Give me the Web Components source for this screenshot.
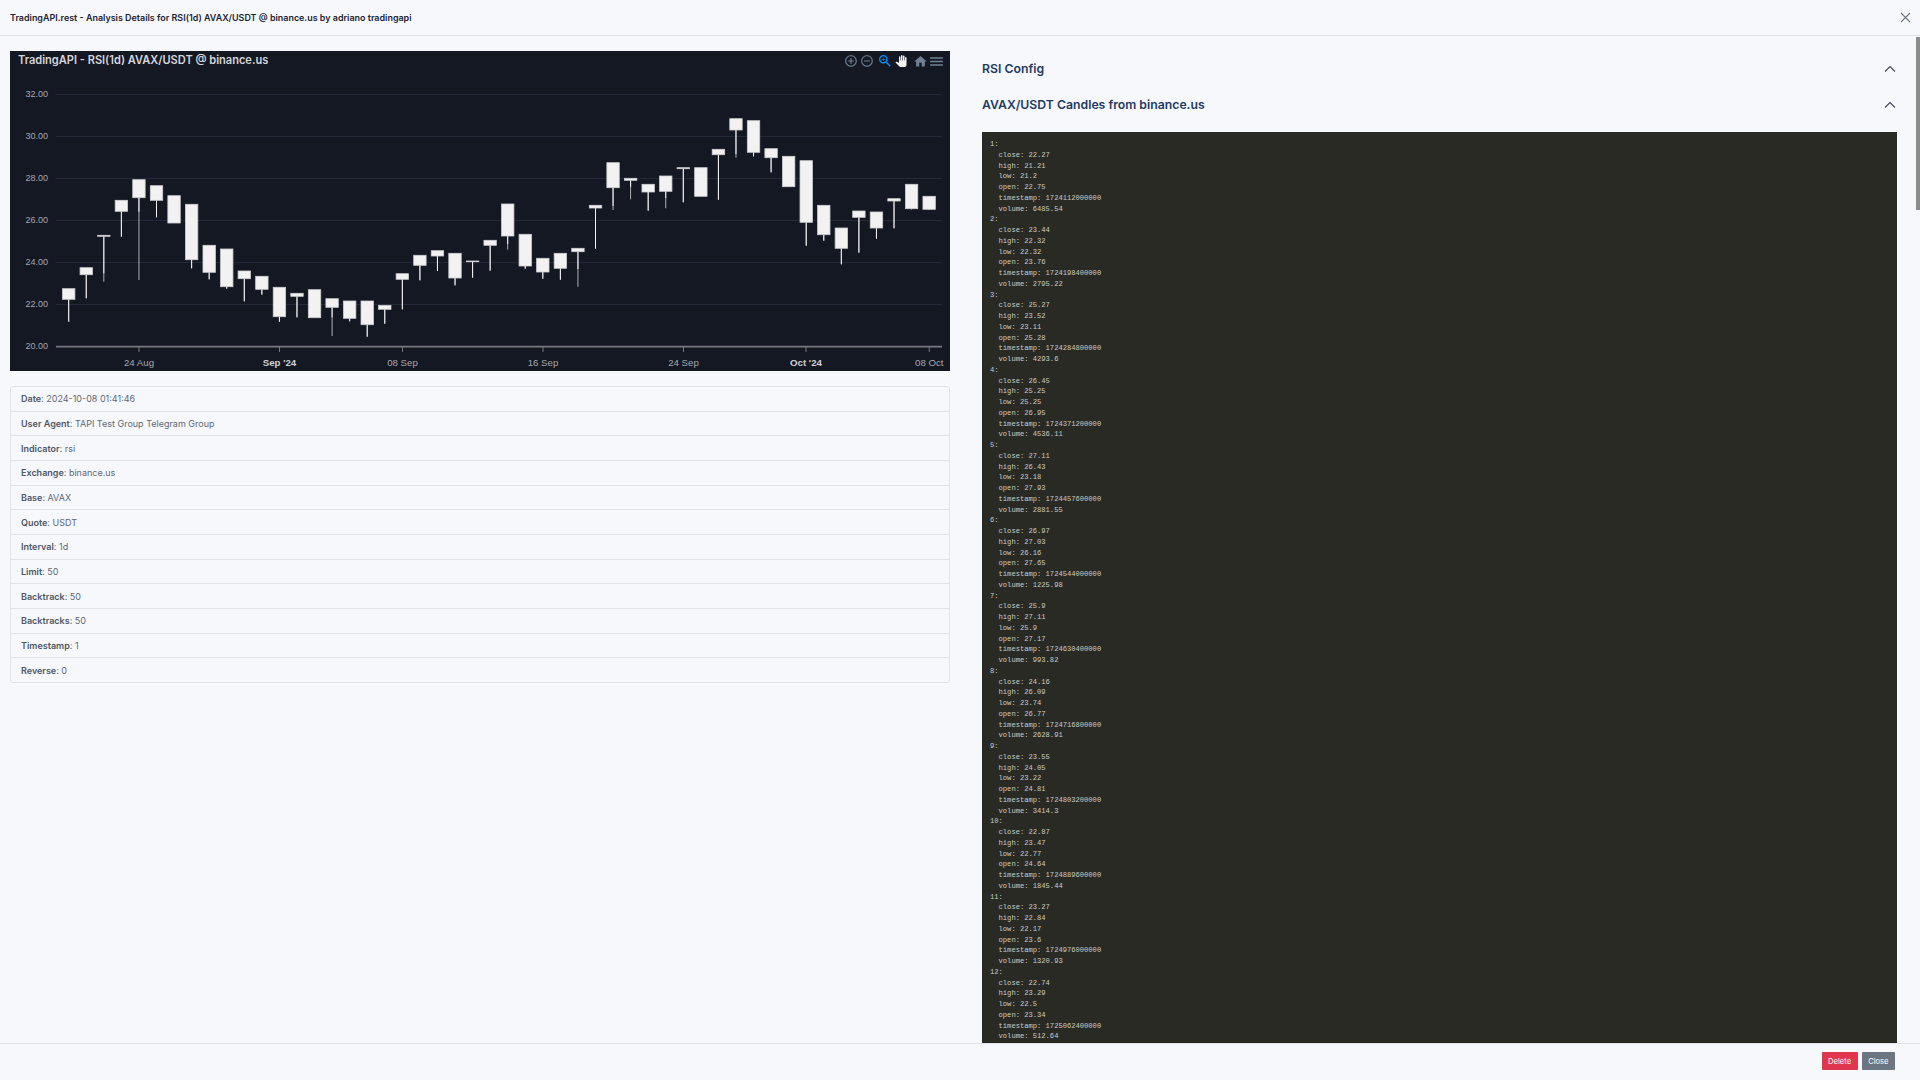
<!DOCTYPE html>
<html>
<head>
<meta charset="utf-8">
<title>TradingAPI.rest</title>
<style>
  html, body { margin: 0; height: 100%; overflow: hidden; }
  body {
    background: #f6f8fc;
    font-family: Inter, "Liberation Sans", sans-serif;
  }
  tapi-modal { height: 100vh; }
</style>
</head>
<body>
<tapi-modal>
  <span slot="title">TradingAPI.rest - Analysis Details for RSI(1d) AVAX/USDT @ binance.us by adriano tradingapi</span>

  <tapi-chart slot="left" title="TradingAPI - RSI(1d) AVAX/USDT @ binance.us"></tapi-chart>
  <tapi-info-list slot="left">
    <tapi-info-row label="Date">2024-10-08 01:41:46</tapi-info-row>
    <tapi-info-row label="User Agent">TAPI Test Group Telegram Group</tapi-info-row>
    <tapi-info-row label="Indicator">rsi</tapi-info-row>
    <tapi-info-row label="Exchange">binance.us</tapi-info-row>
    <tapi-info-row label="Base">AVAX</tapi-info-row>
    <tapi-info-row label="Quote">USDT</tapi-info-row>
    <tapi-info-row label="Interval">1d</tapi-info-row>
    <tapi-info-row label="Limit">50</tapi-info-row>
    <tapi-info-row label="Backtrack">50</tapi-info-row>
    <tapi-info-row label="Backtracks">50</tapi-info-row>
    <tapi-info-row label="Timestamp">1</tapi-info-row>
    <tapi-info-row label="Reverse">0</tapi-info-row>
  </tapi-info-list>

  <tapi-accordion slot="right">RSI Config</tapi-accordion>
  <tapi-accordion slot="right">AVAX/USDT Candles from binance.us</tapi-accordion>
  <tapi-candle-dump slot="right"></tapi-candle-dump>

  <tapi-button slot="footer" kind="danger">Delete</tapi-button>
  <tapi-button slot="footer" kind="muted">Close</tapi-button>
</tapi-modal>

<script>
class tapiModal extends HTMLElement {
    constructor() {
        super();
        this.attachShadow({mode: 'open'});
        this.shadowRoot.innerHTML = `
      <style>
      :host {
        display: flex;
        flex-direction: column;
        position: relative;
      }
      header {
        flex: none;
        height: 35px;
        border-bottom: 1px solid #dfe2e7;
        display: flex;
        align-items: center;
        justify-content: space-between;
        padding: 0 10px;
        font-size: 8.95px;
        font-weight: 600;
        color: #1c2430;
      }
      header svg {
        display: block;
        margin-right: -1px;
      }
      .body {
        flex: 1;
        min-height: 0;
        overflow: hidden;
        display: grid;
        grid-template-columns: 940px 915px;
        column-gap: 32px;
        align-items: start;
        padding: 15px 0 0 10px;
      }
      /* the photograph hides native scrollbars, so the thumb is drawn over the body */
      .thumb {
        position: absolute;
        top: 37px;
        right: 0;
        width: 4px;
        height: 173px;
        background: #8b8b8b;
      }
      .col {
        display: flex;
        flex-direction: column;
        min-width: 0;
      }
      footer {
        flex: none;
        height: 37px;
        box-sizing: border-box;
        border-top: 1px solid #dfe2e7;
        background: #f6f8fc;
        display: flex;
        align-items: center;
        justify-content: flex-end;
        gap: 4px;
        padding: 0 25px 2px 0;
      }
      </style>
      <header>
        <slot name="title"></slot>
        <svg width="11" height="11" viewBox="0 0 11 11" fill="none" stroke="#6f7682" stroke-width="1.1"><path d="M1 1l9 9M10 1l-9 9"/></svg>
      </header>
      <div class="body">
        <div class="col"><slot name="left"></slot></div>
        <div class="col"><slot name="right"></slot></div>
      </div>
      <div class="thumb"></div>
      <footer><slot name="footer"></slot></footer>
    `;
    }
}

// top, bottom, wick end, and where the brighter part of the wick stops (all read off the picture)
const CANDLES = [
    [188.7,199.3,221.7],[167.7,174.7,198.3],[135.3,136.3,181.7,173.3],[100.3,111.3,136.7],[79.7,97.7,180,111.7],
    [85.7,100.3,117.3],[95.7,123,123],[104.3,159.7,168.3],[145.3,172.3,179.3],[149,186.7,188.7],
    [171,178.7,201.3],[176.3,189.3,194.7],[187.3,216.7,221.7],[193.3,196.3,217.3],[189.7,217.7,217.7],
    [198.7,207.3,236,217.3],[201,218.3,221.3],[201,224.7,236.7],[205.3,209.3,223.7],[173.7,179.3,209.3],
    [155.3,165.3,180.3],[150.7,156,171],[153.3,178,185.3],[161,161.7,177.7],[140.3,145.3,170.7],
    [104,136,149.7,144],[134.3,166,168.7],[158.3,172,178.7],[153.3,168.3,179.7],[148.3,151.7,186.7,169],
    [105.3,108,148.7],[62.7,87.7,110,106],[78.3,80.3,99.3,87],[84.3,92,110.7],[76,91.3,108.3,98],
    [67.7,68.7,102.3],[67.7,96.3,96.3],[49.3,54.7,99.7],[18.7,30,57.7,54],[20.7,52.3,56.3],
    [48.7,57.7,72.3],[56.3,86.7,86.7],[60.7,122.3,145.7],[105.3,134.7,140.7],[128,148.3,164.3],
    [111,117.3,152.7],[112,128,138.7],[98.7,101,128.3],[84.3,108.7,109.3],[96.3,109.3,109.7]
];

class tapiChart extends HTMLElement {
    constructor() {
        super();
        this.attachShadow({mode: 'open'});
    }

    connectedCallback() {
        const grid = [['32.00', 94.5], ['30.00', 136.5], ['28.00', 178.5], ['26.00', 220.5], ['24.00', 262.5], ['22.00', 304.5], ['20.00', 346.5]];
        const ticks = [['24 Aug', 139], ["Sep '24", 279.5, true], ['08 Sep', 402.5], ['16 Sep', 543], ['24 Sep', 683.5], ["Oct '24", 806, true], ['08 Oct', 929.3]];

        // everything is in page coordinates, the svg viewBox takes care of the 10,51 origin
        const gridLines = grid.map(([label, y], i) => `
          <text class="y" x="48" y="${y + 2.9}">${label}</text>
          ${i < 6 ? `<line x1="56" x2="942" y1="${y}" y2="${y}" stroke="#242839"/>` : ''}
        `).join('');

        const tickLines = ticks.map(([label, x, bold]) => `
          <line x1="${x}" x2="${x}" y1="347" y2="352" stroke="#78787f"/>
          <text class="x${bold ? ' bold' : ''}" x="${x}" y="366">${label}</text>
        `).join('');

        const candles = CANDLES.map(([top, bottom, end, mid], i) => {
            const x = (68.7 + 17.56 * i).toFixed(2);
            const y1 = 100 + top;
            const y2 = 100 + bottom;
            const y3 = 100 + end;
            const y4 = 100 + (mid || end);
            return `
          <line x1="${x}" x2="${x}" y1="${y2}" y2="${y3}" stroke="#f2f2f2" opacity=".7"/>
          <line x1="${x}" x2="${x}" y1="${y2}" y2="${y4}" stroke="#f2f2f2"/>
          <rect x="${x - 6.2}" y="${y1}" width="12.4" height="${(bottom - top).toFixed(1)}" fill="#f2f2f2" stroke="#cfcfd2" stroke-width=".8"/>`;
        }).join('');

        this.shadowRoot.innerHTML = `
      <style>
      :host {
        display: block;
        position: relative;
        height: 320px;
        background: #141823;
      }
      svg.plot {
        display: block;
        width: 940px;
        height: 320px;
        font-family: Inter, "Liberation Sans", sans-serif;
      }
      .title {
        font-size: 11.05px;
        font-weight: 600;
        fill: #d4d6db;
      }
      .y {
        font-family: "Liberation Sans", sans-serif;
        font-size: 9px;
        fill: #a4a6ae;
        text-anchor: end;
      }
      .x {
        font-family: "Liberation Sans", sans-serif;
        font-size: 9.7px;
        fill: #a4a6ae;
        text-anchor: middle;
      }
      .x.bold {
        font-weight: 700;
        fill: #cfd1d6;
      }
      .toolbar {
        position: absolute;
        top: 2px;
        right: 5px;
        display: flex;
        align-items: center;
        height: 16px;
      }
      .toolbar svg {
        display: block;
      }
      </style>
      <svg class="plot" viewBox="10 51 940 320">
        <text class="title" x="18" y="64">${this.getAttribute('title')}</text>
        ${gridLines}
        <line x1="56" x2="942" y1="346.6" y2="346.6" stroke="#78787f" stroke-width="1.6"/>
        ${tickLines}
        ${candles}
      </svg>
      <div class="toolbar">
        <svg width="14" height="14" viewBox="0 0 24 24" fill="#6e8192" style="margin-right:2px"><path d="M13 7h-2v4H7v2h4v4h2v-4h4v-2h-4V7zm-1-5C6.48 2 2 6.48 2 12s4.48 10 10 10 10-4.48 10-10S17.52 2 12 2zm0 18c-4.41 0-8-3.59-8-8s3.59-8 8-8 8 3.59 8 8-3.59 8-8 8z"/></svg>
        <svg width="14" height="14" viewBox="0 0 24 24" fill="#6e8192" style="margin-right:3px"><path d="M7 11v2h10v-2H7zm5-9C6.48 2 2 6.48 2 12s4.48 10 10 10 10-4.48 10-10S17.52 2 12 2zm0 18c-4.41 0-8-3.59-8-8s3.59-8 8-8 8 3.59 8 8-3.59 8-8 8z"/></svg>
        <svg width="16" height="16" viewBox="0 0 24 24" fill="#008ffb" style="margin-right:2px"><path d="M15.5 14h-.79l-.28-.27C15.41 12.59 16 11.11 16 9.5 16 5.91 13.09 3 9.5 3S3 5.91 3 9.5 5.91 16 9.5 16c1.61 0 3.09-.59 4.23-1.57l.27.28v.79l5 4.99L20.49 19l-4.99-5zm-6 0C7.01 14 5 11.99 5 9.5S7.01 5 9.5 5 14 7.01 14 9.5 11.99 14 9.5 14z"/><path d="M12 10h-2v2H9v-2H7V9h2V7h1v2h2v1z"/></svg>
        <svg width="12" height="12" viewBox="0 0 24 24" fill="#f2f2f2" style="margin-right:6px"><path d="M23 5.5V20c0 2.2-1.8 4-4 4h-7.3c-1.08 0-2.1-.43-2.85-1.19L1 14.83s1.26-1.23 1.3-1.25c.22-.19.49-.29.79-.29.22 0 .42.06.6.16.04.01 4.31 2.46 4.31 2.46V4c0-.83.67-1.5 1.5-1.5S11 3.17 11 4v7h1V1.5c0-.83.67-1.5 1.5-1.5S15 .67 15 1.5V11h1V2.5c0-.83.67-1.5 1.5-1.5s1.5.67 1.5 1.5V11h1V5.5c0-.83.67-1.5 1.5-1.5s1.5.67 1.5 1.5z"/></svg>
        <svg width="15" height="15" viewBox="0 0 24 24" fill="#6e8192"><path d="M10 20v-6h4v6h5v-8h3L12 3 2 12h3v8z"/></svg>
        <svg width="17" height="17" viewBox="0 0 24 24" fill="#6e8192"><path d="M3 18h18v-2H3v2zm0-5h18v-2H3v2zm0-7v2h18V6H3z"/></svg>
      </div>
    `;
    }
}

class tapiInfoList extends HTMLElement {
    constructor() {
        super();
        this.attachShadow({mode: 'open'});
        this.shadowRoot.innerHTML = `
      <style>
      :host {
        display: block;
        margin-top: 15px;
        border: 1px solid #dfe2e7;
        border-radius: 3px;
      }
      </style>
      <slot></slot>
    `;
    }
}

class tapiInfoRow extends HTMLElement {
    constructor() {
        super();
        this.attachShadow({mode: 'open'});
    }

    connectedCallback() {
        this.shadowRoot.innerHTML = `
      <style>
      :host {
        display: flex;
        align-items: center;
        height: 23.67px;
        padding: 0 10px;
        border-bottom: 1px solid #dfe2e7;
        font-size: 9px;
        color: #626976;
      }
      :host(:last-child) {
        border-bottom: 0;
      }
      strong {
        font-weight: 600;
        color: #4f5764;
      }
      span {
        white-space: pre;
      }
      </style>
      <strong>${this.getAttribute('label')}</strong><span>: </span><slot></slot>
    `;
    }
}

class tapiAccordion extends HTMLElement {
    constructor() {
        super();
        this.attachShadow({mode: 'open'});
        this.shadowRoot.innerHTML = `
      <style>
      :host {
        display: flex;
        align-items: center;
        justify-content: space-between;
        height: 36px;
        margin-top: -0.5px;
        margin-bottom: 0.5px;
        font-size: 12.25px;
        font-weight: 600;
        color: #1e3a63;
      }
      svg {
        display: block;
        margin-right: 1px;
      }
      </style>
      <slot></slot>
      <svg width="12" height="8" viewBox="0 0 12 8" fill="none" stroke="#3f4658" stroke-width="1.1"><path d="M1 6.5l5-5 5 5"/></svg>
    `;
    }
}

const DUMP = [
    ['22.27', '21.21', '21.2', '22.75', '1724112000000', '6485.54'],
    ['23.44', '22.32', '22.32', '23.76', '1724198400000', '2795.22'],
    ['25.27', '23.52', '23.11', '25.28', '1724284800000', '4293.6'],
    ['26.45', '25.25', '25.25', '26.95', '1724371200000', '4536.11'],
    ['27.11', '26.43', '23.18', '27.93', '1724457600000', '2881.55'],
    ['26.97', '27.03', '26.16', '27.65', '1724544000000', '1225.98'],
    ['25.9', '27.11', '25.9', '27.17', '1724630400000', '993.82'],
    ['24.16', '26.09', '23.74', '26.77', '1724716800000', '2628.91'],
    ['23.55', '24.05', '23.22', '24.81', '1724803200000', '3414.3'],
    ['22.87', '23.47', '22.77', '24.64', '1724889600000', '1845.44'],
    ['23.27', '22.84', '22.17', '23.6', '1724976000000', '1320.93'],
    ['22.74', '23.29', '22.5', '23.34', '1725062400000', '512.64']
];

class tapiCandleDump extends HTMLElement {
    constructor() {
        super();
        this.attachShadow({mode: 'open'});
    }

    connectedCallback() {
        const text = DUMP.map(([close, high, low, open, timestamp, volume], i) =>
            `${i + 1}:\n  close: ${close}\n  high: ${high}\n  low: ${low}\n  open: ${open}\n  timestamp: ${timestamp}\n  volume: ${volume}`
        ).join('\n');

        this.shadowRoot.innerHTML = `
      <style>
      :host {
        display: block;
        margin-top: 9px;
      }
      pre {
        margin: 0;
        /* the real list goes on far below the fold */
        min-height: 1000px;
        padding: 7px 8px;
        background: #292a24;
        color: #c9cbc4;
        font: 7.14px/10.75px "Liberation Mono", monospace;
      }
      </style>
      <pre>${text}</pre>
    `;
    }
}

class tapiButton extends HTMLElement {
    constructor() {
        super();
        this.attachShadow({mode: 'open'});
        this.shadowRoot.innerHTML = `
      <style>
      :host {
        display: flex;
        align-items: center;
        justify-content: center;
        height: 18px;
        padding: 0 6.5px;
        border-radius: 1px;
        font-size: 7.6px;
        font-weight: 400;
        color: #fff;
        background: #6c7683;
      }
      :host([kind="danger"]) {
        background: #e0374f;
      }
      </style>
      <slot></slot>
    `;
    }
}

customElements.define('tapi-modal', tapiModal);
customElements.define('tapi-chart', tapiChart);
customElements.define('tapi-info-list', tapiInfoList);
customElements.define('tapi-info-row', tapiInfoRow);
customElements.define('tapi-accordion', tapiAccordion);
customElements.define('tapi-candle-dump', tapiCandleDump);
customElements.define('tapi-button', tapiButton);
</script>
</body>
</html>
